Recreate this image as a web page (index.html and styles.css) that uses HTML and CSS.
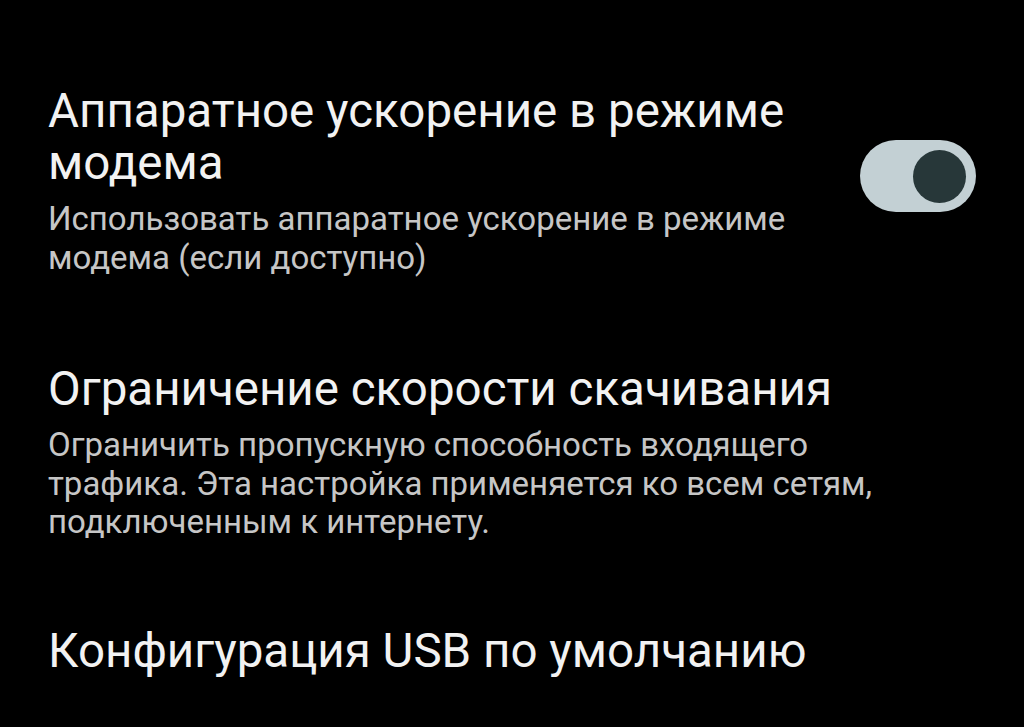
FILE: index.html
```html
<!DOCTYPE html>
<html lang="ru">
<head>
    <meta charset="UTF-8">
    <meta name="viewport" content="width=device-width, initial-scale=1.0">
    <title>Режим модема</title>
    <link rel="stylesheet" href="styles.css">
</head>
<body>
    <div class="settings">
        <div class="pref pref-switch">
            <div class="pref-text">
                <p class="pref-title">Аппаратное ускорение в режиме модема</p>
                <p class="pref-summary">Использовать аппаратное ускорение в режиме модема (если доступно)</p>
            </div>
            <div class="switch on"><span class="thumb"></span></div>
        </div>

        <div class="pref">
            <div class="pref-text">
                <p class="pref-title">Ограничение скорости скачивания</p>
                <p class="pref-summary">Ограничить пропускную способность входящего трафика. Эта настройка применяется ко всем сетям, подключенным к интернету.</p>
            </div>
        </div>

        <div class="pref pref-last">
            <div class="pref-text">
                <p class="pref-title">Конфигурация USB по умолчанию</p>
            </div>
        </div>
    </div>
</body>
</html>
```

FILE: styles.css
```css
* {
    margin: 0;
    padding: 0;
    box-sizing: border-box;
}
body {
    background: #000;
    color: #fff;
    font-family: Roboto, "Noto Sans", sans-serif;
    overflow: hidden;
}
.settings {
    padding: 85px 48px 0 48px;
}
.pref {
    display: flex;
    align-items: center;
    gap: 40px;
}
.pref + .pref {
    margin-top: 86px;
}
.pref + .pref-last {
    margin-top: 83px;
}
.pref-text {
    flex: 1;
}
.pref-switch .pref-text {
    max-width: 760px;
}
.pref-title {
    font-size: 47.5px;
    line-height: 52px;
    color: #f2f2f2;
}
.pref-summary {
    margin-top: 11px;
    font-size: 33px;
    line-height: 38.5px;
    color: #c6c6c6;
    max-width: 860px;
}
.switch {
    width: 116px;
    height: 72px;
    margin-left: auto;
    margin-bottom: 10px;
    border-radius: 36px;
    background: #c3d0d4;
    display: flex;
    align-items: center;
    justify-content: flex-end;
    padding-right: 10px;
}
.switch .thumb {
    width: 53px;
    height: 53px;
    border-radius: 50%;
    background: #273739;
}
```
